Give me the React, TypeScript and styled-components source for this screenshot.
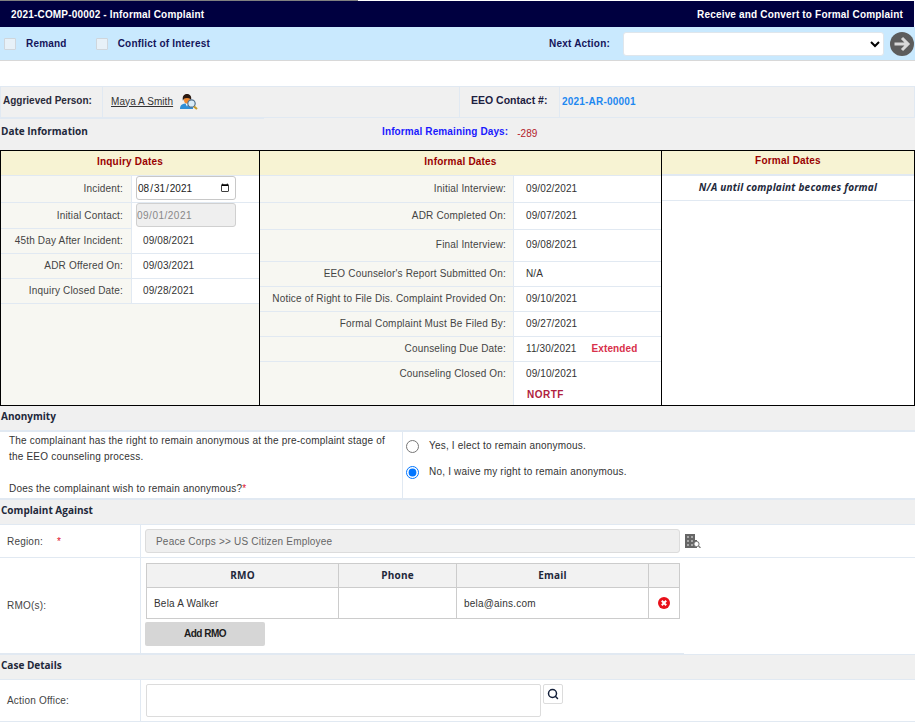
import styled, { createGlobalStyle } from "styled-components";
import { Search } from "lucide-react";

const GlobalStyle = createGlobalStyle`
  html, body {
    margin: 0;
    padding: 0;
    background: #fff;
    overflow: hidden;
  }
  body {
    font-family: "Liberation Sans", Arial, sans-serif;
    font-size: 10px;
    letter-spacing: 0.2px;
    color: #333;
  }
  * {
    box-sizing: border-box;
  }
`;

const inquiryRows = [
  { label: "45th Day After Incident:", value: "09/08/2021" },
  { label: "ADR Offered On:", value: "09/03/2021" },
  { label: "Inquiry Closed Date:", value: "09/28/2021" },
];

const informalRows = [
  { label: "Initial Interview:", value: "09/02/2021", height: 27 },
  { label: "ADR Completed On:", value: "09/07/2021", height: 27 },
  { label: "Final Interview:", value: "09/08/2021", height: 32 },
  { label: "EEO Counselor's Report Submitted On:", value: "N/A", height: 25 },
  { label: "Notice of Right to File Dis. Complaint Provided On:", value: "09/10/2021", height: 25 },
  { label: "Formal Complaint Must Be Filed By:", value: "09/27/2021", height: 25 },
  { label: "Counseling Due Date:", value: "11/30/2021", height: 25, note: "Extended" },
];

function App() {
  return (
    <Page>
      <GlobalStyle />
      <TopEdge />
      <TitleBar>
        <span>2021-COMP-00002 - Informal Complaint</span>
        <span>Receive and Convert to Formal Complaint</span>
      </TitleBar>
      <ActionBar>
        <CheckGroup>
          <CheckBox type="checkbox" disabled />
          <ActionLabel>Remand</ActionLabel>
        </CheckGroup>
        <CheckGroup>
          <CheckBox type="checkbox" disabled />
          <ActionLabel>Conflict of Interest</ActionLabel>
        </CheckGroup>
        <NextAction>
          <ActionLabel>Next Action:</ActionLabel>
          <ActionSelect defaultValue="">
            <option value=""></option>
          </ActionSelect>
          <GoIcon viewBox="0 0 24 24" aria-hidden="true">
            <circle cx="12" cy="12" r="12" fill="#5c5c5c" />
            <path d="M4.500 12h13M12 6l6 6-6 6" fill="none" stroke="#d8d8d8" strokeWidth="3" />
          </GoIcon>
        </NextAction>
      </ActionBar>

      <PersonRow>
        <PersonLabel>Aggrieved Person:</PersonLabel>
        <PersonValue>
          <PersonLink>Maya A Smith</PersonLink>
          <PersonIcon viewBox="0 0 18 16" aria-hidden="true">
            <path d="M0 15c0-4 2-5.500 7-5.500s6 1.500 6 5.500z" fill="#2f8fd8" />
            <path d="M5.500 9.500h3L7 12.500z" fill="#fff" />
            <ellipse cx="7" cy="6" rx="3" ry="3.500" fill="#f08a32" />
            <path d="M3 7C2 2 4 0 7 0s5 2 4 7c-.5-2-1-3-4-3S3.500 5 3 7z" fill="#2b1a12" />
            <circle cx="11.500" cy="9.500" r="3.700" fill="#d9ecf8" stroke="#53718c" strokeWidth="1.200" />
            <path d="M14 12.500l3 2.500" stroke="#c49a2a" strokeWidth="2.200" />
          </PersonIcon>
        </PersonValue>
        <ContactLabel>EEO Contact #:</ContactLabel>
        <ContactValue>2021-AR-00001</ContactValue>
      </PersonRow>

      <DateInfoRow>
        <SectionTitle>Date Information</SectionTitle>
        <RemainingLabel>Informal Remaining Days:</RemainingLabel>
        <RemainingValue>-289</RemainingValue>
      </DateInfoRow>

      <DatesPanel>
        <DatesColumn>
          <DatesHeader>Inquiry Dates</DatesHeader>
          <InquiryRow $height={27}>
            <DateLabel $right={8}>Incident:</DateLabel>
            <DateValue $pad={4}>
              <DateInput type="date" defaultValue="2021-08-31" />
            </DateValue>
          </InquiryRow>
          <InquiryRow $height={26}>
            <DateLabel $right={8}>Initial Contact:</DateLabel>
            <DateValue $pad={4}>
              <DisabledDate>09/01/2021</DisabledDate>
            </DateValue>
          </InquiryRow>
          {inquiryRows.map((row) => (
            <InquiryRow key={row.label} $height={25}>
              <DateLabel $right={8}>{row.label}</DateLabel>
              <DateValue $pad={11}>{row.value}</DateValue>
            </InquiryRow>
          ))}
        </DatesColumn>

        <DatesColumn>
          <DatesHeader>Informal Dates</DatesHeader>
          {informalRows.map((row) => (
            <InformalRow key={row.label} $height={row.height}>
              <DateLabel $right={7}>{row.label}</DateLabel>
              <DateValue $pad={12}>
                {row.value}
                {row.note && <ExtendedNote>{row.note}</ExtendedNote>}
              </DateValue>
            </InformalRow>
          ))}
          <ClosedRow>
            <ClosedLabel $right={7}>Counseling Closed On:</ClosedLabel>
            <ClosedValue>
              <span>09/10/2021</span>
              <NortfNote>NORTF</NortfNote>
            </ClosedValue>
          </ClosedRow>
        </DatesColumn>

        <FormalColumn>
          <FormalHeader>Formal Dates</FormalHeader>
          <FormalNote>N/A until complaint becomes formal</FormalNote>
        </FormalColumn>
      </DatesPanel>

      <SectionBar>
        <SectionTitle>Anonymity</SectionTitle>
      </SectionBar>
      <AnonymityRow>
        <AnonymityText>
          The complainant has the right to remain anonymous at the pre-complaint stage of
          <br />
          the EEO counseling process.
          <br />
          <br />
          Does the complainant wish to remain anonymous?<Required>*</Required>
        </AnonymityText>
        <AnonymityOptions>
          <RadioLine>
            <Radio type="radio" name="anon" />
            Yes, I elect to remain anonymous.
          </RadioLine>
          <RadioLine>
            <Radio type="radio" name="anon" defaultChecked />
            No, I waive my right to remain anonymous.
          </RadioLine>
        </AnonymityOptions>
      </AnonymityRow>

      <SectionBar>
        <SectionTitle>Complaint Against</SectionTitle>
      </SectionBar>
      <FormRow $height={33}>
        <FormLabel>
          Region:<RegionStar>*</RegionStar>
        </FormLabel>
        <RegionField>
          <RegionBox>Peace Corps &gt;&gt; US Citizen Employee</RegionBox>
          <BuildingIcon viewBox="0 0 16 14" aria-hidden="true">
            <path d="M0 0h10v14H0zM10 6h2v8h-2z" fill="#666" />
            <path
              d="M2 2h2v2H2zM6 2h2v2H6zM2 6h2v2H2zM6 6h2v2H6zM2 10h2v2H2zM6 10h2v2H6z"
              fill="#a8a8a8"
            />
            <circle cx="11.500" cy="10" r="2.600" fill="#fff" stroke="#777" />
            <path d="M13.500 12l2 2" stroke="#777" strokeWidth="1.200" />
          </BuildingIcon>
        </RegionField>
      </FormRow>
      <RmoRow>
        <RmoLabel>RMO(s):</RmoLabel>
        <RmoField>
          <RmoTable>
            <colgroup>
              <col style={{ width: 192 }} />
              <col style={{ width: 118 }} />
              <col style={{ width: 192 }} />
              <col style={{ width: 31 }} />
            </colgroup>
            <thead>
              <tr>
                <RmoHead>RMO</RmoHead>
                <RmoHead>Phone</RmoHead>
                <RmoHead>Email</RmoHead>
                <RmoHead />
              </tr>
            </thead>
            <tbody>
              <tr>
                <RmoCell>Bela A Walker</RmoCell>
                <RmoCell />
                <RmoCell>bela@ains.com</RmoCell>
                <RemoveCell>
                  <RemoveIcon viewBox="0 0 12 12" aria-hidden="true">
                    <circle cx="6" cy="6" r="6" fill="#e8101a" />
                    <path d="M3.800 3.800l4.400 4.400M8.200 3.800L3.800 8.200" stroke="#fff" strokeWidth="2" />
                  </RemoveIcon>
                </RemoveCell>
              </tr>
            </tbody>
          </RmoTable>
          <AddButton type="button">Add RMO</AddButton>
        </RmoField>
      </RmoRow>

      <SectionBar>
        <SectionTitle>Case Details</SectionTitle>
      </SectionBar>
      <FormRow $height={42}>
        <FormLabel>Action Office:</FormLabel>
        <OfficeField>
          <OfficeBox />
          <SearchButton type="button">
            <Search size={12} strokeWidth={3} color="#14203a" />
          </SearchButton>
        </OfficeField>
      </FormRow>
    </Page>
  );
}

export default App;

const Page = styled.div`
  width: 915px;
  height: 723px;
  overflow: hidden;
`;

const TopEdge = styled.div`
  width: 358px;
  height: 1px;
  background: #808080;
`;

const TitleBar = styled.div`
  width: 914px;
  height: 26px;
  padding: 0 11px;
  display: flex;
  align-items: center;
  justify-content: space-between;
  background: #000040;
  color: #fff;
  font-weight: bold;
  font-size: 10px;
  letter-spacing: 0.18px;
`;

const ActionBar = styled.div`
  height: 34px;
  padding: 0 1px 0 4px;
  display: flex;
  align-items: center;
  background: #c9e9fe;
  border-bottom: 1px solid #d8d8d8;
`;

const CheckGroup = styled.div`
  display: flex;
  align-items: center;
  gap: 10px;
  margin-right: 29px;
`;

const CheckBox = styled.input`
  appearance: none;
  width: 12px;
  height: 12px;
  margin: 0;
  background: #e7f1f8;
  border: 1px solid #cfd6dc;
  border-radius: 1px;
`;

const ActionLabel = styled.span`
  font-weight: bold;
  letter-spacing: 0.2px;
  color: #14145a;
`;

const NextAction = styled.div`
  margin-left: auto;
  display: flex;
  align-items: center;
`;

const ActionSelect = styled.select`
  width: 261px;
  height: 24px;
  margin-left: 13px;
  background-color: #fff;
  border: 1px solid #dfe6ec;
  border-radius: 3px;
`;

const GoIcon = styled.svg`
  width: 24px;
  height: 24px;
  margin-left: 6px;
`;

const PersonRow = styled.div`
  margin-top: 25px;
  height: 32px;
  display: grid;
  grid-template-columns: 102px 357px 100px 1fr;
  background: #f0f0f0;
  border: 1px solid #e1e9f2;
`;

const PersonLabel = styled.div`
  padding: 0 0 4px 2px;
  display: flex;
  align-items: center;
  font-weight: bold;
  letter-spacing: 0;
  white-space: nowrap;
  color: #2a2a3a;
  border-right: 1px solid #e1e9f2;
`;

const PersonValue = styled.div`
  padding-left: 8px;
  display: flex;
  align-items: center;
  gap: 7px;
  border-right: 1px solid #e1e9f2;
`;

const PersonLink = styled.span`
  text-decoration: underline;
  letter-spacing: 0.08px;
  color: #333;
  margin-bottom: 2px;
`;

const PersonIcon = styled.svg`
  width: 18px;
  height: 16px;
`;

const ContactLabel = styled.div`
  padding: 0 0 4px 11px;
  display: flex;
  align-items: center;
  font-size: 10.5px;
  font-weight: bold;
  letter-spacing: 0;
  white-space: nowrap;
  color: #1c2040;
  border-right: 1px solid #e1e9f2;
`;

const ContactValue = styled.div`
  padding: 0 0 2px 2px;
  display: flex;
  align-items: center;
  font-weight: bold;
  color: #1e88f0;
`;

const DateInfoRow = styled.div`
  position: relative;
  height: 32px;
  padding: 0 0 6px 1px;
  display: grid;
  grid-template-columns: 381px auto 1fr;
  align-items: center;
  background: #f0f0f0;

  &::before {
    content: "";
    position: absolute;
    left: 0;
    top: 0;
    width: 264px;
    height: 1px;
    background: #e1e9f2;
  }
`;

const SectionTitle = styled.span`
  font-family: "Open Sans", sans-serif;
  font-weight: bold;
  color: #22283a;
  letter-spacing: 0;
`;

const RemainingLabel = styled.span`
  font-weight: bold;
  letter-spacing: 0.12px;
  color: #1a1aff;
`;

const RemainingValue = styled.span`
  margin-left: 9px;
  margin-top: 4px;
  letter-spacing: 0;
  color: #b3202a;
`;

const DatesPanel = styled.div`
  height: 256px;
  width: 915px;
  display: grid;
  grid-template-columns: 259px 402px 1fr;
  border: 1px solid #000;
`;

const DatesColumn = styled.div`
  border-right: 1px solid #000;
  background: #f7f7f2;
`;

const DatesHeader = styled.div`
  height: 25px;
  padding-bottom: 3px;
  display: flex;
  align-items: center;
  justify-content: center;
  background: #f7f3d3;
  border-bottom: 1px solid #e1e9f2;
  font-weight: bold;
  color: #990000;
`;

const InquiryRow = styled.div<{ $height: number }>`
  height: ${(p) => p.$height}px;
  display: grid;
  grid-template-columns: 130px 1fr;
  border-bottom: 1px solid #e1e9f2;
`;

const InformalRow = styled.div<{ $height: number }>`
  height: ${(p) => p.$height}px;
  display: grid;
  grid-template-columns: 253px 1fr;
  border-bottom: 1px solid #e1e9f2;
`;

const DateLabel = styled.div<{ $right: number }>`
  padding: 0 ${(p) => p.$right}px 2px 0;
  display: flex;
  align-items: center;
  justify-content: flex-end;
  white-space: nowrap;
  letter-spacing: 0.18px;
  color: #444;
`;

const DateValue = styled.div<{ $pad: number }>`
  padding: 0 0 2px ${(p) => p.$pad}px;
  display: flex;
  align-items: center;
  background: #fff;
  border-left: 1px solid #e1e9f2;
  letter-spacing: 0.12px;
  color: #333;
`;

const DateInput = styled.input`
  width: 100px;
  height: 24px;
  padding: 0 3px 0 0;
  font-family: "Liberation Sans", Arial, sans-serif;
  font-size: 10px;
  letter-spacing: 0;
  color: #222;
  background: #fff;
  border: 1px solid #c8c8c8;
  border-radius: 3px;
`;

const DisabledDate = styled.div`
  width: 100px;
  height: 24px;
  padding-left: 0;
  display: flex;
  align-items: center;
  letter-spacing: 0.5px;
  color: #888;
  background: #efefef;
  border: 1px solid #d0d0d0;
  border-radius: 3px;
`;

const ExtendedNote = styled.span`
  margin-left: 15px;
  font-weight: bold;
  color: #d8304a;
`;

const ClosedRow = styled.div`
  height: 43px;
  display: grid;
  grid-template-columns: 253px 1fr;
`;

const ClosedLabel = styled(DateLabel)`
  align-items: flex-start;
  padding-top: 6px;
`;

const ClosedValue = styled.div`
  padding: 6px 0 0 12px;
  display: flex;
  flex-direction: column;
  background: #fff;
  border-left: 1px solid #e1e9f2;
  letter-spacing: 0.12px;
`;

const NortfNote = styled.span`
  margin: 10px 0 0 1px;
  font-weight: bold;
  letter-spacing: 0.5px;
  color: #b01e40;
`;

const FormalColumn = styled.div`
  background: #fff;
`;

const FormalHeader = styled(DatesHeader)`
  height: 25px;
  border-bottom-width: 2px;
  padding-bottom: 4px;
`;

const FormalNote = styled.div`
  height: 25px;
  padding-bottom: 3px;
  display: flex;
  align-items: center;
  justify-content: center;
  font-family: "Open Sans", sans-serif;
  font-weight: bold;
  font-style: italic;
  color: #22283a;
  border-bottom: 1px solid #e1e9f2;
`;

const SectionBar = styled.div`
  height: 25px;
  padding: 0 0 4px 1px;
  display: flex;
  align-items: center;
  background: #f0f0f0;
  border-bottom: 1px solid #e1e9f2;
`;

const AnonymityRow = styled.div`
  height: 69px;
  display: grid;
  grid-template-columns: 402px 1fr;
  border-top: 1px solid #e1e9f2;
  border-bottom: 2px solid #e1e9f2;
`;

const AnonymityText = styled.div`
  padding: 1px 0 0 9px;
  line-height: 16px;
  white-space: nowrap;
  color: #333;
`;

const Required = styled.span`
  color: #e0102a;
`;

const AnonymityOptions = styled.div`
  padding: 7px 0 0 3px;
  display: flex;
  flex-direction: column;
  gap: 13px;
  border-left: 1px solid #e1e9f2;
`;

const RadioLine = styled.label`
  display: flex;
  align-items: center;
  height: 13px;
  color: #333;
`;

const Radio = styled.input`
  width: 13px;
  height: 13px;
  margin: 2px 10px 0 0;
`;

const FormRow = styled.div<{ $height: number }>`
  height: ${(p) => p.$height}px;
  display: grid;
  grid-template-columns: 141px 1fr;
  border-bottom: 1px solid #e1e9f2;
`;

const FormLabel = styled.div`
  padding-left: 7px;
  display: flex;
  align-items: center;
  color: #444;
  border-right: 1px solid #e1e9f2;
`;

const RmoLabel = styled(FormLabel)`
  padding-bottom: 2px;
`;

const RegionStar = styled.span`
  margin-left: 14px;
  color: #e0102a;
`;

const RegionField = styled.div`
  padding-left: 4px;
  display: flex;
  align-items: center;
`;

const RegionBox = styled.div`
  width: 535px;
  height: 24px;
  padding-left: 10px;
  display: flex;
  align-items: center;
  color: #666;
  background: #efefef;
  border: 1px solid #dcdcdc;
  border-radius: 3px;
`;

const BuildingIcon = styled.svg`
  width: 16px;
  height: 14px;
  margin-left: 5px;
`;

const RmoRow = styled.div`
  position: relative;
  height: 97px;
  display: grid;
  grid-template-columns: 141px 1fr;
  border-bottom: 1px solid #e1e9f2;

  &::after {
    content: "";
    position: absolute;
    left: 0;
    bottom: 0;
    width: 684px;
    height: 1px;
    background: #e1e9f2;
  }
`;

const RmoField = styled.div`
  padding: 5px 0 0 4px;
`;

const RmoTable = styled.table`
  width: 534px;
  margin-left: 1px;
  table-layout: fixed;
  border-collapse: collapse;
`;

const RmoHead = styled.th`
  height: 24px;
  padding-bottom: 3px;
  background: #f2f2f2;
  border: 1px solid #ccc;
  font-family: "Open Sans", sans-serif;
  font-weight: bold;
  font-size: 10px;
  letter-spacing: 0.2px;
  color: #22283a;
`;

const RmoCell = styled.td`
  height: 31px;
  padding: 0 0 0 7px;
  border: 1px solid #ccc;
  color: #333;
`;

const RemoveCell = styled(RmoCell)`
  padding: 0;
  text-align: center;
`;

const RemoveIcon = styled.svg`
  display: block;
  width: 12px;
  height: 12px;
  margin: 0 auto;
`;

const AddButton = styled.button`
  display: block;
  width: 120px;
  height: 24px;
  margin-top: 3px;
  padding: 0 0 2px;
  font-family: "Liberation Sans", Arial, sans-serif;
  font-size: 10px;
  font-weight: bold;
  letter-spacing: -0.5px;
  color: #1c1c1c;
  background: #d6d6d6;
  border: none;
  border-radius: 2px;
`;

const OfficeField = styled.div`
  padding: 4px 0 0 5px;
  display: flex;
  align-items: flex-start;
  gap: 2px;
`;

const OfficeBox = styled.div`
  width: 395px;
  height: 33px;
  background: #fff;
  border: 1px solid #dcdcdc;
  border-radius: 2px;
`;

const SearchButton = styled.button`
  width: 20px;
  height: 20px;
  padding: 0;
  display: flex;
  align-items: center;
  justify-content: center;
  background: #fff;
  border: 1px solid #dcdcdc;
  border-radius: 2px;
`;
